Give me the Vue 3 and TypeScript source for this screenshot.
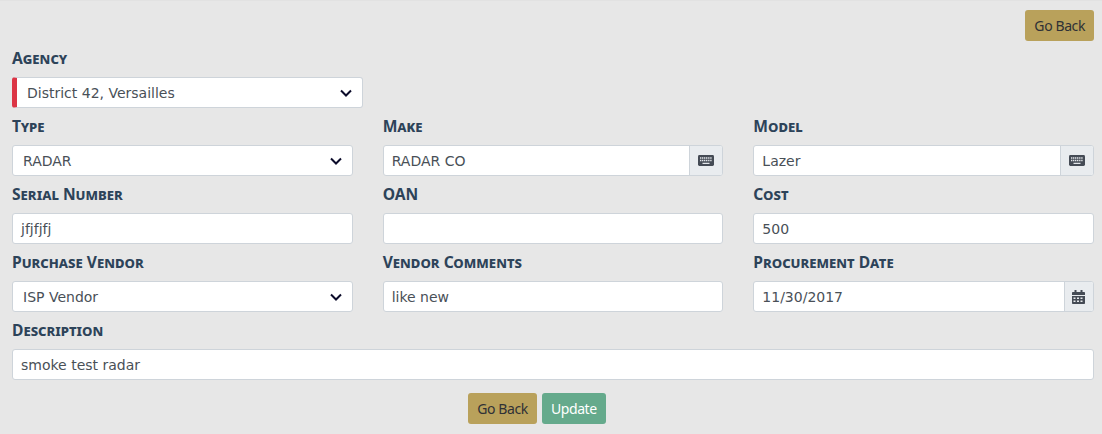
<script setup lang="ts">
interface Field {
  label: string
  value: string
  kind: 'select' | 'input' | 'keyboard' | 'date'
}

const fields: Field[] = [
  { label: 'Type', value: 'RADAR', kind: 'select' },
  { label: 'Make', value: 'RADAR CO', kind: 'keyboard' },
  { label: 'Model', value: 'Lazer', kind: 'keyboard' },
  { label: 'Serial Number', value: 'jfjfjfj', kind: 'input' },
  { label: 'OAN', value: '', kind: 'input' },
  { label: 'Cost', value: '500', kind: 'input' },
  { label: 'Purchase Vendor', value: 'ISP Vendor', kind: 'select' },
  { label: 'Vendor Comments', value: 'like new', kind: 'input' },
  { label: 'Procurement Date', value: '11/30/2017', kind: 'date' },
]
</script>

<template>
  <div class="page">
    <div class="top-actions">
      <button class="btn btn-back">Go Back</button>
    </div>

    <div class="field agency">
      <label>Agency</label>
      <div class="control select required">
        <span class="value">District 42, Versailles</span>
        <svg class="chevron" viewBox="0 0 12 8"><path d="M1 1.5l5 5 5-5" /></svg>
      </div>
    </div>

    <div class="grid">
      <div v-for="f in fields" :key="f.label" class="field">
        <label>{{ f.label }}</label>
        <div class="control" :class="{ select: f.kind === 'select' }">
          <span class="value">{{ f.value }}</span>
          <svg v-if="f.kind === 'select'" class="chevron" viewBox="0 0 12 8"><path d="M1 1.5l5 5 5-5" /></svg>
          <span v-if="f.kind === 'keyboard'" class="addon">
            <svg width="16" height="11" viewBox="0 0 16 11">
              <rect width="16" height="11" rx="1.4" fill="#454b55" />
              <path d="M2 3h12M2 5.5h12" stroke="#e3e6ea" stroke-width="1.3" stroke-dasharray="1.3 0.6" />
              <path d="M4.5 8.3h7" stroke="#e3e6ea" stroke-width="1.3" />
            </svg>
          </span>
          <span v-if="f.kind === 'date'" class="addon date">
            <svg width="13" height="14" viewBox="0 0 13 14">
              <path fill="#454b55" d="M2.5 0h2v2h4V0h2v2h1.7c.5 0 .8.3.8.8V5H0V2.8c0-.5.3-.8.8-.8h1.7zM0 6h13v7.2c0 .5-.3.8-.8.8H.8c-.5 0-.8-.3-.8-.8z" />
              <path d="M1.5 8.2h10M1.5 11.2h10" stroke="#e9ecef" stroke-width="1.4" stroke-dasharray="2 1.5" />
            </svg>
          </span>
        </div>
      </div>
    </div>

    <div class="field">
      <label>Description</label>
      <div class="control"><span class="value">smoke test radar</span></div>
    </div>

    <div class="bottom-actions">
      <button class="btn btn-back">Go Back</button>
      <button class="btn btn-update">Update</button>
    </div>
  </div>
</template>

<style>
body {
  background: #e7e7e7;
}
</style>

<style scoped>
.page {
  box-sizing: border-box;
  height: 434px;
  padding: 9px 8px 0 12px;
  background: #e7e7e7;
  border-top: 1px solid #e2e2e2;
  font-family: "Open Sans", "Noto Sans", sans-serif;
  overflow: hidden;
}

.top-actions {
  display: flex;
  justify-content: flex-end;
  height: 30px;
}

.btn {
  box-sizing: border-box;
  height: 31px;
  padding: 0 8px;
  border: 1px solid transparent;
  border-radius: 3px;
  font-family: "Noto Sans", "Open Sans", sans-serif;
  font-size: 14px;
  letter-spacing: -0.4px;
  line-height: 1;
}

.btn-back {
  background: #b9a15b;
  color: #2f3136;
}

.btn-update {
  background: #65aa8c;
  color: #fff;
}

.field {
  display: flex;
  flex-direction: column;
}

.field label {
  height: 37px;
  padding-top: 8px;
  box-sizing: border-box;
  font-family: "Noto Sans", sans-serif;
  font-variant: small-caps;
  font-weight: 700;
  font-size: 15.6px;
  line-height: 20px;
  color: #2d4359;
}

.agency {
  width: 351px;
}

.grid {
  display: grid;
  grid-template-columns: repeat(3, 1fr);
  column-gap: 30px;
}

.control {
  box-sizing: border-box;
  display: flex;
  align-items: center;
  height: 31px;
  background: #fff;
  border: 1px solid #ced4da;
  border-radius: 3px;
  overflow: hidden;
}

.value {
  flex: 1;
  padding-left: 8px;
  font-family: "DejaVu Sans", sans-serif;
  font-size: 14px;
  color: #495057;
}

.select .value {
  padding-left: 10px;
}

.required {
  border-left: 5px solid #dc3545;
}

.chevron {
  width: 12px;
  height: 8px;
  margin-right: 10px;
  fill: none;
  stroke: #0b0b2a;
  stroke-width: 2;
}

.addon {
  display: flex;
  align-items: center;
  justify-content: center;
  width: 32px;
  height: 100%;
  background: #e9ecef;
  border-left: 1px solid #ced4da;
}

.addon.date {
  width: 28px;
}

.bottom-actions {
  display: flex;
  justify-content: center;
  gap: 5px;
  margin-top: 13px;
  padding-right: 32px;
}
</style>
